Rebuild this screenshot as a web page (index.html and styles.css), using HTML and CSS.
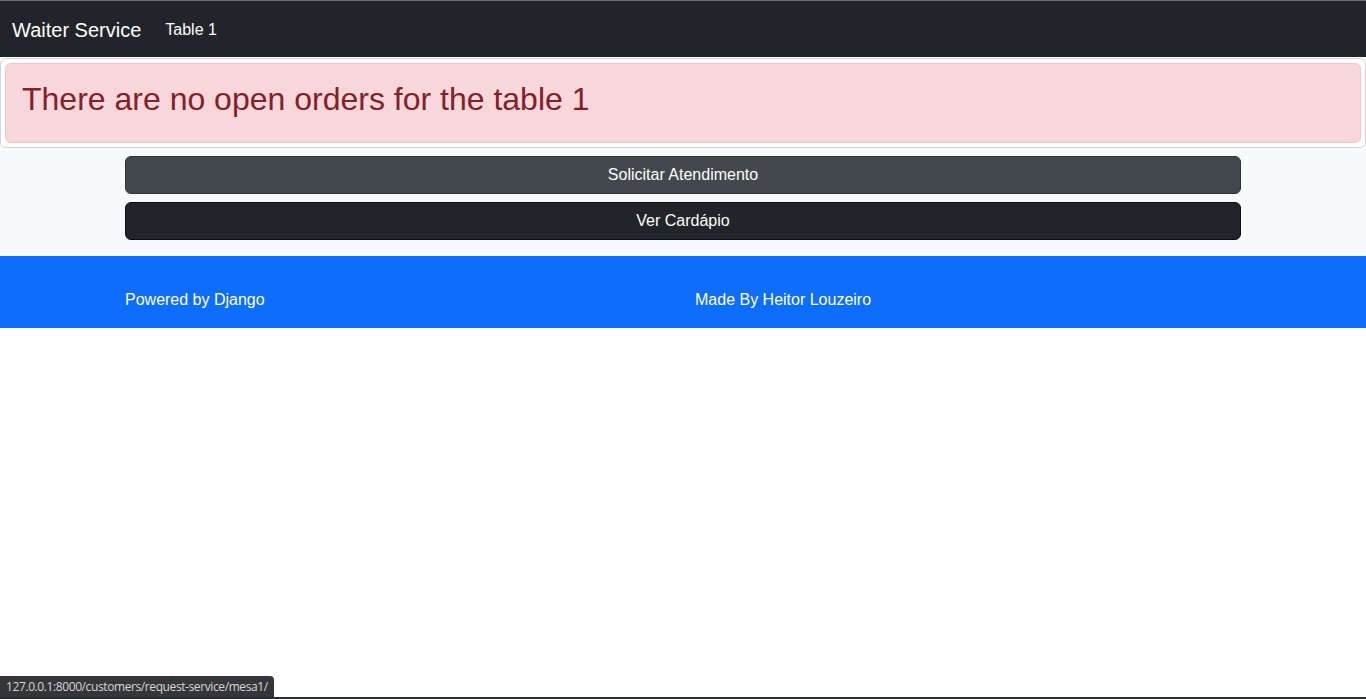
FILE: index.html
```html
<!DOCTYPE html>
<html lang="en">
<head>
<meta charset="utf-8">
<title>Waiter Service</title>
<link rel="stylesheet" href="styles.css">
</head>
<body>
<div class="topline"></div>
<nav class="navbar">
  <a class="brand" href="#">Waiter Service</a>
  <a class="nav-link" href="#">Table 1</a>
</nav>
<div class="card">
  <div class="alert">There are no open orders for the table 1</div>
</div>
<section class="actions">
  <div class="container stack">
    <a class="btn btn-gray" href="#">Solicitar Atendimento</a>
    <a class="btn btn-dark" href="#">Ver Cardápio</a>
  </div>
</section>
<footer class="footer">
  <div class="container-wide row">
    <div class="col">Powered by Django</div>
    <div class="col">Made By Heitor Louzeiro</div>
  </div>
</footer>
<div class="statusbar">127.0.0.1:8000/customers/request-service/mesa1/</div>
<div class="bottomline"></div>
</body>
</html>
```
FILE: styles.css
```css
* { box-sizing: border-box; }
html, body { margin: 0; padding: 0; }
body {
  font-family: "Liberation Sans", Arial, sans-serif;
  font-size: 16px;
  line-height: 1.5;
  color: #212529;
  background: #fff;
}
a { text-decoration: none; }
.topline { height: 1px; background: #6b6e72; }
.navbar {
  height: 56px;
  background: #212529;
  display: flex;
  align-items: center;
  padding: 2px 12px 0;
}
.brand {
  color: #fff;
  font-size: 20px;
  line-height: 30px;
  margin-right: 24px;
}
.nav-link {
  color: #fff;
  font-size: 16px;
  line-height: 24px;
}
.card {
  margin-top: 1px;
  border: 1px solid #d4d4d4;
  border-radius: 6px;
  background: #fff;
  padding: 4px;
}
.alert {
  background: #f8d7da;
  border: 1px solid #f5c2c7;
  border-radius: 6px;
  color: #842029;
  font-size: 32px;
  line-height: 46px;
  padding: 12px 16px 20px;
}
.actions {
  background: #f8f9fa;
  padding: 8px 0 16px;
}
.container {
  width: 1116px;
  margin: 0 auto;
}
.container-wide {
  width: 1140px;
  margin: 0 auto;
}
.stack {
  display: flex;
  flex-direction: column;
  gap: 8px;
}
.btn {
  display: block;
  text-align: center;
  color: #fff;
  font-size: 16px;
  line-height: 24px;
  padding: 6px 12px;
  border-radius: 6px;
}
.btn-gray { background: #43484c; border: 1px solid #2f3337; }
.btn-dark { background: #212529; border: 1px solid #0c0d0e; }
.footer {
  background: #0d6efd;
  color: #fff;
  padding: 32px 0 16px;
}
.row { display: flex; }
.col { flex: 1; line-height: 24px; padding: 0 12px; }
.statusbar {
  position: fixed;
  left: 0;
  bottom: 2px;
  height: 21px;
  padding: 0 6px;
  background: #35363a;
  color: #d6d6d6;
  font-family: "Open Sans", "DejaVu Sans", sans-serif;
  font-size: 12px;
  line-height: 21px;
  border-top-right-radius: 4px;
  letter-spacing: -0.4px;
}
.bottomline {
  position: fixed;
  left: 0;
  right: 0;
  bottom: 0;
  height: 2px;
  background: #2b2c2f;
}
```
